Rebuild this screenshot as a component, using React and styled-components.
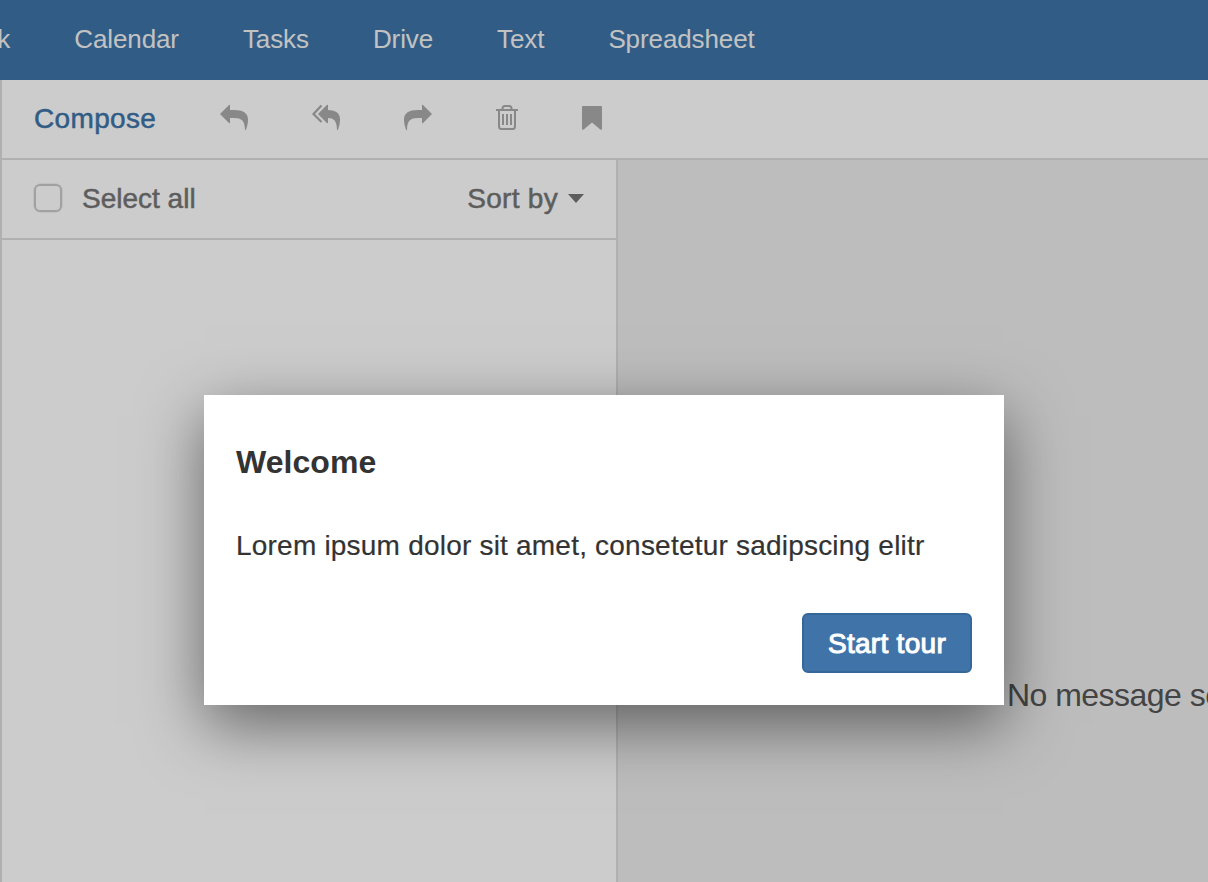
import React from "react";
import styled, { createGlobalStyle } from "styled-components";

const GlobalStyle = createGlobalStyle`
  * { box-sizing: border-box; }
  body { margin: 0; overflow: hidden; font-family: "Liberation Sans", Arial, sans-serif; }
`;
const Page = styled.div`
  position: relative; width: 1208px; height: 882px; overflow: hidden;
  display: flex; flex-direction: column; background: #fff;
`;
const NavBar = styled.nav`
  height: 80px; flex: none; display: flex; align-items: center; padding-bottom: 2px;
  background: #3d74a7; overflow: hidden;
`;
const NavItem = styled.a`
  flex: none; padding: 0 32px; font-size: 26px; line-height: 30px; color: #f3f3f3;
  letter-spacing: -0.1px;
  margin-left: ${(p) => p.$shift || 0}px;
`;
const Mail = styled.main`
  flex: 1; display: flex; flex-direction: column; border-left: 2px solid #dcdcdc; min-height: 0;
`;
const Toolbar = styled.div`
  height: 80px; flex: none; display: flex; align-items: center; padding: 0 0 3px 32px;
  border-bottom: 2px solid #dcdcdc; color: #aaa;
`;
const Compose = styled.a`
  width: 186px; padding-top: 2px; color: #3d74a7; font-size: 28px; line-height: 32px; letter-spacing: 0.35px;
  -webkit-text-stroke: 0.5px #3d74a7;
`;
const Icon = styled.svg`
  flex: none; display: block; width: ${(p) => p.$w}px; height: 28px; margin-right: ${(p) => p.$gap || 0}px;
`;
const Columns = styled.div`flex: 1; display: flex; min-height: 0;`;
const List = styled.section`width: 616px; flex: none; border-right: 2px solid #dcdcdc;`;
const ListHeader = styled.header`
  height: 80px; display: flex; align-items: center; padding: 0 32px 3px;
  border-bottom: 2px solid #dcdcdc; color: #757575; font-size: 28px; line-height: 32px;
  -webkit-text-stroke: 0.5px #757575;
`;
const Checkbox = styled.span`
  width: 28px; height: 28px; border: 2px solid #cacaca; border-radius: 6px; margin-right: 20px;
  box-shadow: 0 0 0 0.5px #e4e4e4;
`;
const Label = styled.span`padding-top: 2px;`;
const Sort = styled.span`
  margin-left: auto; padding-top: 2px; display: flex; align-items: center; letter-spacing: 0.3px;
`;
const Caret = styled.span`
  margin-left: 10px; border: 8px solid transparent; border-top: 9px solid #757575; border-bottom: 0;
`;
const Detail = styled.section`flex: 1; background: #ededed; padding: 516px 0 0 389px; overflow: hidden;`;
const Empty = styled.p`
  margin: 0; color: #555; font-size: 32px; line-height: 38px; white-space: nowrap; letter-spacing: -0.53px;
`;
const Backdrop = styled.div`
  position: absolute; inset: 0; background: rgba(0, 0, 0, 0.2);
  display: flex; justify-content: center; align-items: flex-start; padding-top: 395px;
`;
const Dialog = styled.div`
  width: 800px; height: 310px; background: #fff; padding: 48px 32px 32px; color: #333;
  display: flex; flex-direction: column; box-shadow: 0 20px 60px rgba(0, 0, 0, 0.5);
`;
const Title = styled.h1`margin: 0; font-size: 32px; line-height: 38px; letter-spacing: 0.05px;`;
const Body = styled.p`
  margin: 45px 0 0; font-size: 28px; line-height: 40px; white-space: nowrap; letter-spacing: 0.21px;
  -webkit-text-stroke: 0.2px #333;
`;
const Button = styled.button`
  margin: auto 0 0 auto; width: 170px; height: 60px; padding: 2px 0 0; border: 2px solid #356798; border-radius: 6px;
  background: #4074a9; color: #fff; font: 28px/40px "Liberation Sans", Arial, sans-serif; letter-spacing: 0.3px;
  -webkit-text-stroke: 1px #fff;
`;

const ReplyPath = () => (
  <path fill="currentColor" d="M0 10 9 1Q10 .3 10 1.4V6H14C23 6 28 9 28 15.5C28 19.5 27 22.5 26 25.8Q25.4 26.5 25 25.8C24.8 17 22 14 14 14H10V18.6Q10 19.7 9 19Z" />
);

export default function App() {
  return (
    <Page>
      <GlobalStyle />
      <NavBar>
        <NavItem $shift={-34.7}>k</NavItem>
        <NavItem>Calendar</NavItem>
        <NavItem>Tasks</NavItem>
        <NavItem>Drive</NavItem>
        <NavItem>Text</NavItem>
        <NavItem>Spreadsheet</NavItem>
      </NavBar>
      <Mail>
        <Toolbar>
          <Compose>Compose</Compose>
          <Icon $w={28} $gap={64} viewBox="0 0 28 28"><ReplyPath /></Icon>
          <Icon $w={28} $gap={64} viewBox="0 0 28 28">
            <path d="M9.5 1.5 1.5 10 9.5 18" fill="none" stroke="currentColor" strokeWidth="2.2" />
            <path fill="currentColor" d="M6 10 14.8 1Q16 .2 16 1.4V6C24 6 28 9.5 28 15.5C28 19.5 27 22.5 26 25.8Q25.4 26.5 25 25.8C24.8 17 22 14 16 14V18.6Q16 19.8 14.8 19Z" />
          </Icon>
          <Icon $w={28} $gap={64} viewBox="0 0 28 28"><g transform="translate(28 0) scale(-1 1)"><ReplyPath /></g></Icon>
          <Icon $w={22} $gap={64} viewBox="0 0 22 28" fill="none" stroke="currentColor" strokeWidth="2">
            <path d="M0 6H22M3 6V22Q3 25 5 25H17Q19 25 19 22V6M6.5 6V4.5Q6.5 2 9 2H13Q15.5 2 15.5 4.5V6M7 10V21M11 10V21M15 10V21" />
          </Icon>
          <Icon $w={20} viewBox="0 0 20 28">
            <path fill="currentColor" d="M1 2H19Q20 2 20 3V25Q19.5 26.2 18.3 25.5L10 18.5 1.7 25.5Q.5 26.2 0 25V3Q0 2 1 2Z" />
          </Icon>
        </Toolbar>
        <Columns>
          <List>
            <ListHeader>
              <Checkbox />
              <Label>Select all</Label>
              <Sort>Sort by<Caret /></Sort>
            </ListHeader>
          </List>
          <Detail><Empty>No message selected</Empty></Detail>
        </Columns>
      </Mail>
      <Backdrop>
        <Dialog role="dialog">
          <Title>Welcome</Title>
          <Body>Lorem ipsum dolor sit amet, consetetur sadipscing elitr</Body>
          <Button>Start tour</Button>
        </Dialog>
      </Backdrop>
    </Page>
  );
}
